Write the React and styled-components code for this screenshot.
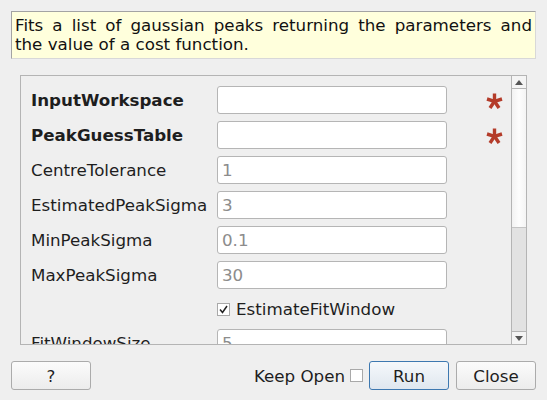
import React from 'react';
import styled, { createGlobalStyle } from 'styled-components';

const GlobalStyle = createGlobalStyle`
  html, body {
    margin: 0;
    padding: 0;
    background: #efefef;
  }
  body {
    font-family: 'DejaVu Sans', 'Liberation Sans', sans-serif;
    font-size: 16.7px;
    color: #1e1e1e;
  }
`;

const Dialog = styled.div`
  width: 547px;
  height: 400px;
  box-sizing: border-box;
  padding: 11px 11px 0 11px;
  display: flex;
  flex-direction: column;
  background: #efefef;
`;

const Description = styled.div`
  border: 1px solid #a3a3a3;
  border-right-color: #d8d8d8;
  border-bottom-color: #d8d8d8;
  background: #ffffdc;
  padding: 4px 3px 4px 3px;
  line-height: 19px;
  color: #111;
`;

const DescLine = styled.div`
  text-align: ${({ $justify }) => ($justify ? 'justify' : 'left')};
  text-align-last: ${({ $justify }) => ($justify ? 'justify' : 'left')};
  white-space: nowrap;
`;

const Frame = styled.div`
  margin: 16px 9px 0 9px;
  height: 270px;
  box-sizing: border-box;
  border: 1px solid #b4b4b4;
  display: flex;
  overflow: hidden;
`;

const Content = styled.div`
  flex: 1;
  padding: 10px 0 0 10px;
  display: flex;
  flex-direction: column;
  gap: 7px;
  overflow: hidden;
`;

const Row = styled.div`
  display: grid;
  grid-template-columns: 186px 230px 1fr;
  align-items: center;
  height: ${({ $h }) => $h || 28}px;
  flex-shrink: 0;
`;

const Label = styled.div`
  font-weight: ${({ $bold }) => ($bold ? 700 : 400)};
  white-space: nowrap;
  overflow: visible;
`;

const Input = styled.div`
  height: 28px;
  box-sizing: border-box;
  border: 1px solid #b5b5b5;
  border-radius: 3px;
  background: #fff;
  padding-left: 4px;
  display: flex;
  align-items: center;
  color: #8c8c8c;
`;

const Required = styled.div`
  display: flex;
  padding-left: 39px;
  padding-top: 2px;
`;

const CheckLine = styled.label`
  display: flex;
  align-items: center;
  gap: 6px;
`;

const Box = styled.span`
  width: 13px;
  height: 13px;
  box-sizing: border-box;
  border: 1px solid #a9a9a9;
  background: #fff;
  display: inline-flex;
  align-items: center;
  justify-content: center;
`;

const ScrollBar = styled.div`
  width: 14px;
  border-left: 1px solid #b4b4b4;
  display: flex;
  flex-direction: column;
  background: #e2e2e2;
`;

const Arrow = styled.div`
  height: 13px;
  box-sizing: border-box;
  background: #f4f4f4;
  border-${({ $down }) => ($down ? 'top' : 'bottom')}: 1px solid #b4b4b4;
  display: flex;
  align-items: center;
  justify-content: center;
  flex-shrink: 0;
`;

const Handle = styled.div`
  height: 139px;
  box-sizing: border-box;
  background: linear-gradient(to right, #f2f2f2, #fdfdfd 50%, #f4f4f4);
  border-bottom: 1px solid #c4c4c4;
  flex-shrink: 0;
`;

const Trough = styled.div`
  flex: 1;
`;

const Footer = styled.div`
  margin-top: 16px;
  display: flex;
  align-items: center;
`;

const Button = styled.div`
  width: 80px;
  height: 29px;
  box-sizing: border-box;
  border: 1px solid ${({ $primary }) => ($primary ? '#3d78b0' : '#ababab')};
  border-radius: 3px;
  background: ${({ $primary }) =>
    $primary
      ? 'linear-gradient(#f5f8fb, #dfe7ef)'
      : 'linear-gradient(#fbfbfb, #ececec)'};
  display: flex;
  align-items: center;
  justify-content: center;
  margin-left: ${({ $gap }) => $gap || 0}px;
`;

const KeepOpen = styled.div`
  margin-left: auto;
  display: flex;
  align-items: center;
  gap: 5px;
`;

const Star = () => (
  <svg width="17" height="16" viewBox="0 0 17 16">
    <g stroke="#b43c2a" strokeWidth="3.4" strokeLinecap="butt">
      <line x1="8.5" y1="8.3" x2="8.5" y2="0.5" />
      <line x1="8.5" y1="8.3" x2="1" y2="6" />
      <line x1="8.5" y1="8.3" x2="16" y2="6" />
      <line x1="8.5" y1="8.3" x2="4" y2="15" />
      <line x1="8.5" y1="8.3" x2="13" y2="15" />
    </g>
  </svg>
);

const Tri = ({ down }) => (
  <svg width="8" height="5" viewBox="0 0 8 5">
    <polygon points={down ? '0,0 8,0 4,5' : '0,5 8,5 4,0'} fill="#555" />
  </svg>
);

const rows = [
  { name: 'InputWorkspace', bold: true, required: true },
  { name: 'PeakGuessTable', bold: true, required: true },
  { name: 'CentreTolerance', value: '1' },
  { name: 'EstimatedPeakSigma', value: '3' },
  { name: 'MinPeakSigma', value: '0.1' },
  { name: 'MaxPeakSigma', value: '30' },
];

const App = () => (
  <>
    <GlobalStyle />
    <Dialog>
      <Description>
        <DescLine $justify>Fits a list of gaussian peaks returning the parameters and</DescLine>
        <DescLine>the value of a cost function.</DescLine>
      </Description>

      <Frame>
        <Content>
          {rows.map((r) => (
            <Row key={r.name}>
              <Label $bold={r.bold}>{r.name}</Label>
              <Input>{r.value}</Input>
              {r.required && (
                <Required>
                  <Star />
                </Required>
              )}
            </Row>
          ))}
          <Row $h={26}>
            <span />
            <CheckLine>
              <Box>
                <svg width="9" height="9" viewBox="0 0 9 9">
                  <path d="M1 4.5 L3.5 7.5 L8 1" fill="none" stroke="#222" strokeWidth="1.5" />
                </svg>
              </Box>
              EstimateFitWindow
            </CheckLine>
          </Row>
          <Row>
            <Label>FitWindowSize</Label>
            <Input>5</Input>
          </Row>
        </Content>
        <ScrollBar>
          <Arrow>
            <Tri />
          </Arrow>
          <Handle />
          <Trough />
          <Arrow $down>
            <Tri down />
          </Arrow>
        </ScrollBar>
      </Frame>

      <Footer>
        <Button>?</Button>
        <KeepOpen>
          Keep Open
          <Box />
        </KeepOpen>
        <Button $primary $gap={6}>Run</Button>
        <Button $gap={7}>Close</Button>
      </Footer>
    </Dialog>
  </>
);

export default App;
